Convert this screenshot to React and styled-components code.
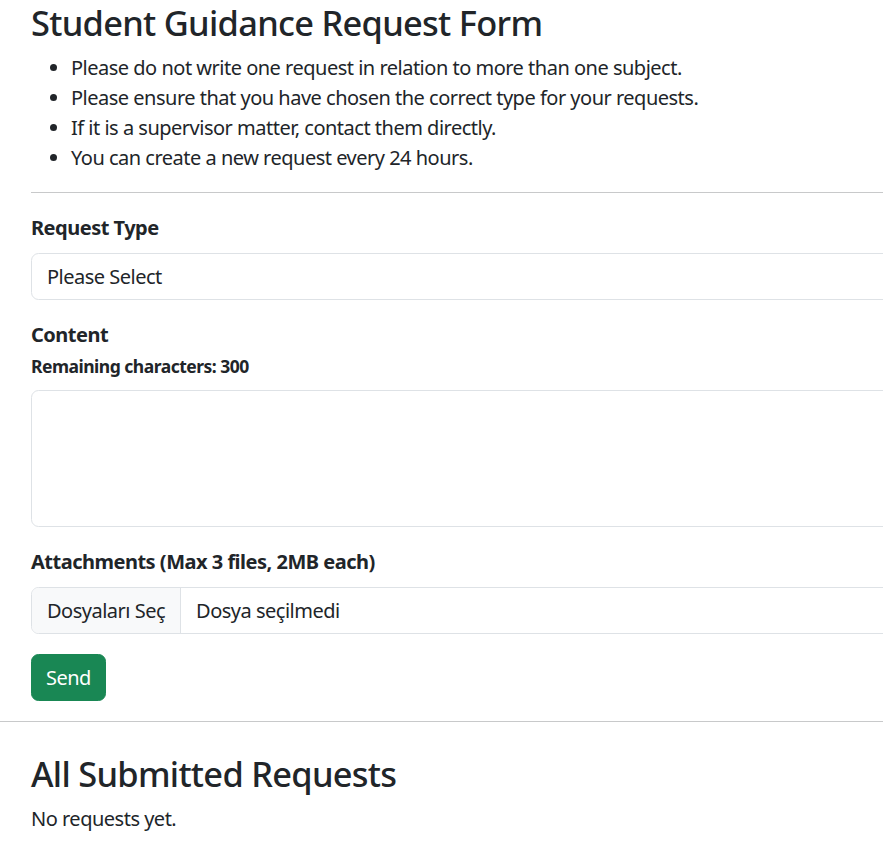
import React, { useState } from "react";
import styled, { createGlobalStyle } from "styled-components";

const GlobalStyle = createGlobalStyle`
  html, body {
    margin: 0;
    padding: 0;
    background: #fff;
    overflow: hidden;
  }
  body {
    font-family: "Noto Sans", "Open Sans", sans-serif;
    font-size: 20px;
    line-height: 30px;
    letter-spacing: -0.5px;
    color: #212529;
  }
  * { box-sizing: border-box; }
`;

const Page = styled.div`
  width: 100%;
  padding-top: 2px;
  overflow: hidden;
`;

const Container = styled.div`
  width: 1240px;
  padding-left: 31px;
  padding-top: ${(p) => p.$top || 0}px;
`;

const Title = styled.h2`
  margin: 0 0 10px;
  font-size: 34.4px;
  line-height: 41px;
  font-weight: 500;
  letter-spacing: -0.7px;
`;

const Rules = styled.ul`
  margin: 0 0 19px;
  padding-left: 40px;
  li {
    line-height: 30px;
  }
`;

const Rule = styled.hr`
  margin: 0;
  border: 0;
  border-top: 1px solid #c8c9ca;
  margin-left: ${(p) => (p.$full ? 0 : 31)}px;
  width: ${(p) => (p.$full ? "100%" : "auto")};
`;

const Form = styled.form`
  padding-top: 20px;
  display: flex;
  flex-direction: column;
`;

const Field = styled.div`
  margin-bottom: 20px;
`;

const Label = styled.label`
  display: block;
  font-weight: 700;
  margin-bottom: ${(p) => (p.$tight ? 3 : 10)}px;
`;

const Hint = styled.small`
  display: block;
  font-size: 17.5px;
  line-height: 26px;
  font-weight: 700;
  margin-bottom: 11px;
`;

const Select = styled.div`
  height: 47px;
  border: 1px solid #dee2e6;
  border-radius: 7.5px;
  padding: 7.5px 15px;
  background: #fff;
`;

const TextArea = styled.textarea`
  display: block;
  width: 100%;
  height: 137px;
  border: 1px solid #dee2e6;
  border-radius: 7.5px;
  padding: 7.5px 15px;
  font: inherit;
  color: inherit;
  resize: none;
  outline: none;
`;

const FilePicker = styled.div`
  display: flex;
  height: 47px;
  border: 1px solid #dee2e6;
  border-radius: 7.5px;
  overflow: hidden;
`;

const FileButton = styled.span`
  background: #f8f9fa;
  border-right: 1px solid #dee2e6;
  padding: 7.5px 15px;
  white-space: nowrap;
`;

const FileName = styled.span`
  padding: 7.5px 15px;
`;

const SendButton = styled.button`
  align-self: flex-start;
  height: 47px;
  padding: 7.5px 14px;
  border: 1px solid #198754;
  border-radius: 7.5px;
  background: #198754;
  color: #fff;
  font: inherit;
  letter-spacing: inherit;
  margin-bottom: 20px;
  cursor: pointer;
`;

const Empty = styled.p`
  margin: 4px 0 0;
`;

export default function App() {
  const [content, setContent] = useState("");

  return (
    <Page>
      <GlobalStyle />
      <Container>
        <Title>Student Guidance Request Form</Title>
        <Rules>
          <li>Please do not write one request in relation to more than one subject.</li>
          <li>Please ensure that you have chosen the correct type for your requests.</li>
          <li>If it is a supervisor matter, contact them directly.</li>
          <li>You can create a new request every 24 hours.</li>
        </Rules>
      </Container>
      <Rule />
      <Container>
        <Form onSubmit={(e) => e.preventDefault()}>
          <Field>
            <Label>Request Type</Label>
            <Select>Please Select</Select>
          </Field>
          <Field>
            <Label $tight>Content</Label>
            <Hint>Remaining characters: {300 - content.length}</Hint>
            <TextArea
              value={content}
              maxLength={300}
              onChange={(e) => setContent(e.target.value)}
            />
          </Field>
          <Field>
            <Label>Attachments (Max 3 files, 2MB each)</Label>
            <FilePicker>
              <FileButton>Dosyaları Seç</FileButton>
              <FileName>Dosya seçilmedi</FileName>
            </FilePicker>
          </Field>
          <SendButton type="submit">Send</SendButton>
        </Form>
      </Container>
      <Rule $full />
      <Container $top={31}>
        <Title>All Submitted Requests</Title>
        <Empty>No requests yet.</Empty>
      </Container>
    </Page>
  );
}
